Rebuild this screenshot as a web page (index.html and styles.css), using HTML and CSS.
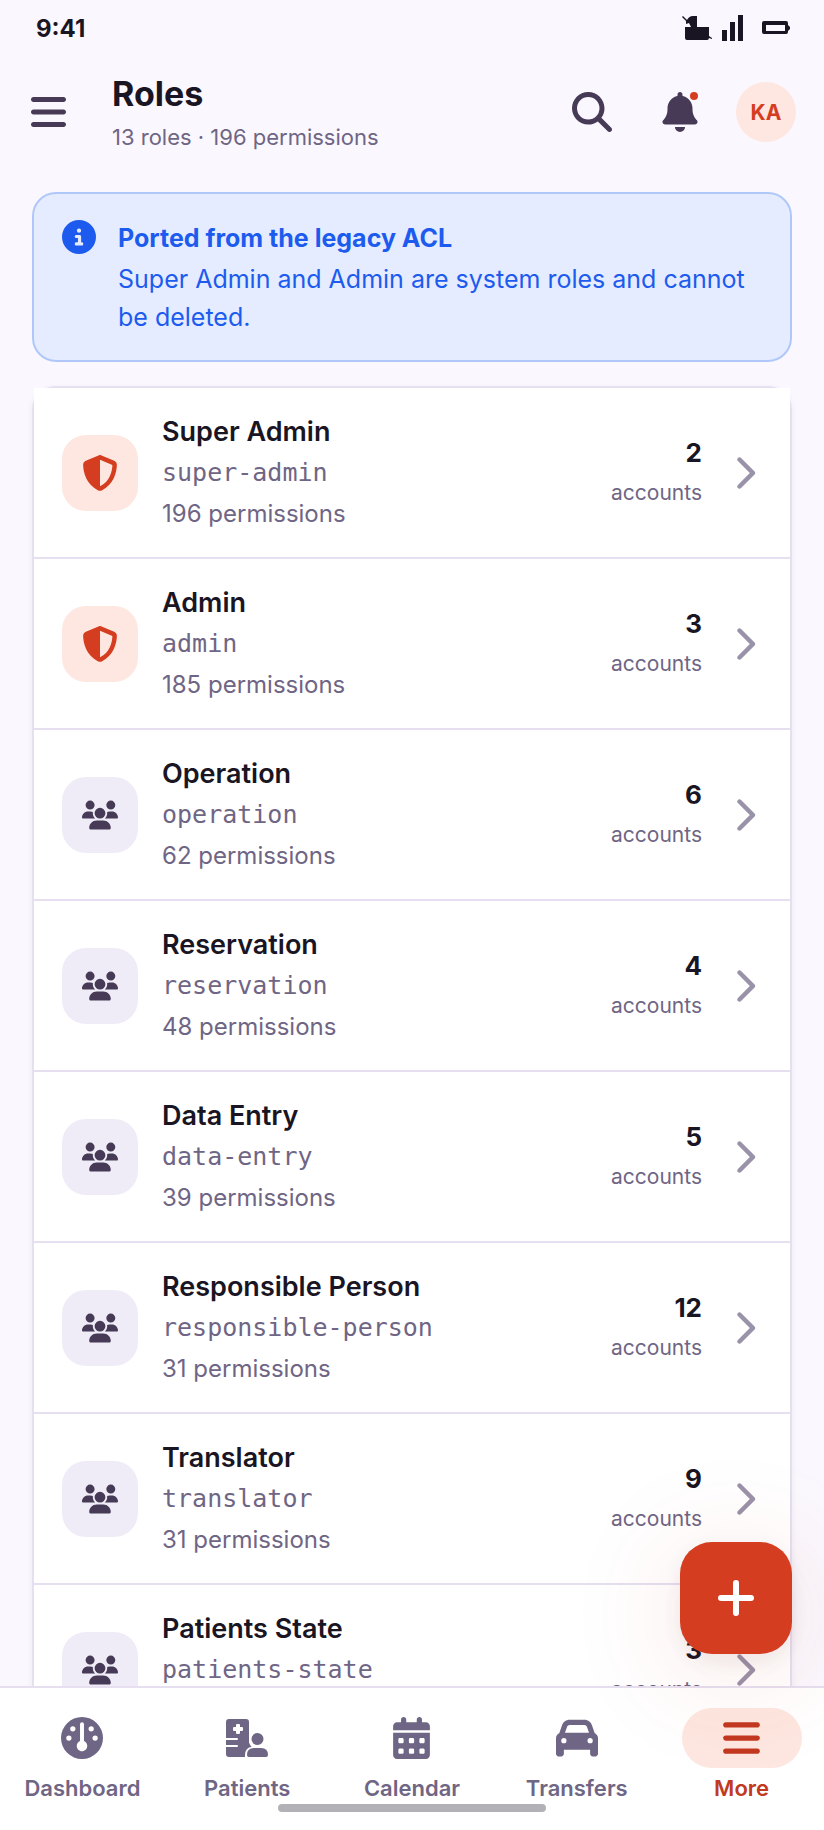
FILE: index.html
```
<!DOCTYPE html>
<html lang="en">
<head>
    <meta charset="UTF-8">
    <meta name="viewport" content="width=device-width, initial-scale=1.0">
    <title>Roles</title>
    <link rel="stylesheet" href="styles.css">
</head>
<body>
    <!-- shared icons -->
    <svg class="sprite" aria-hidden="true">
        <symbol id="shield" viewBox="0 0 512 512">
            <path d="M256 0c4.6 0 9.2 1 13.4 2.9L457.7 82.8c22 9.3 38.4 31 38.3 57.2c-.5 99.2-41.3 280.7-213.6 363.2c-16.7 8-36.1 8-52.8 0C57.3 420.7 16.5 239.2 16 140c-.1-26.2 16.3-47.9 38.3-57.2L242.7 2.9C246.8 1 251.4 0 256 0zm0 66.8l0 378.1C394 378 431.1 230.1 432 141.4L256 66.8z"/>
        </symbol>
        <symbol id="users" viewBox="0 0 640 512">
            <path d="M144 0a80 80 0 1 1 0 160A80 80 0 1 1 144 0zM512 0a80 80 0 1 1 0 160A80 80 0 1 1 512 0zM0 298.7C0 239.8 47.8 192 106.7 192l42.7 0c15.9 0 31 3.5 44.6 9.7c-1.3 7.2-1.9 14.7-1.9 22.3c0 38.2 16.8 72.5 43.3 96c-.2 0-.4 0-.7 0L21.3 320C9.6 320 0 310.4 0 298.7zM405.3 320c-.2 0-.4 0-.7 0c26.6-23.5 43.3-57.8 43.3-96c0-7.6-.7-15-1.9-22.3c13.6-6.3 28.7-9.7 44.6-9.7l42.7 0C592.2 192 640 239.8 640 298.7c0 11.8-9.6 21.3-21.3 21.3l-213.3 0zM224 224a96 96 0 1 1 192 0 96 96 0 1 1 -192 0zM128 485.3C128 411.7 187.7 352 261.3 352l117.3 0C452.3 352 512 411.7 512 485.3c0 14.7-11.9 26.7-26.7 26.7l-330.7 0c-14.7 0-26.7-11.9-26.7-26.7z"/>
        </symbol>
        <symbol id="chevron" viewBox="-96 0 512 512">
            <path d="M310.6 233.4c12.5 12.5 12.5 32.8 0 45.3l-192 192c-12.5 12.5-32.8 12.5-45.3 0s-12.5-32.8 0-45.3L242.7 256 73.4 86.6c-12.5-12.5-12.5-32.8 0-45.3s32.8-12.5 45.3 0l192 192z"/>
        </symbol>
        <symbol id="bars" viewBox="0 0 448 512">
            <path d="M0 96C0 78.300 14.300 64 32 64l384 0c17.700 0 32 14.300 32 32s-14.300 32-32 32L32 128C14.300 128 0 113.700 0 96zM0 256c0-17.700 14.300-32 32-32l384 0c17.700 0 32 14.300 32 32s-14.300 32-32 32L32 288c-17.700 0-32-14.300-32-32zM448 416c0 17.700-14.300 32-32 32L32 448c-17.700 0-32-14.300-32-32s14.300-32 32-32l384 0c17.700 0 32 14.300 32 32z"/>
        </symbol>
    </svg>

    <div class="status-bar">
        <span class="time">9:41</span>
        <div class="status-icons">
            <svg width="30" height="28" viewBox="0 0 30 28">
                <path d="M3 13h12V2H11C8 2 6 4 5 6L1 2 0 3l4 4v3l3-1 2 4H3v11q0 2 2 2h20q2 0 2-2l3 1v-1l-3-2V13z"/>
            </svg>
            <svg width="22" height="28" viewBox="0 0 22 28">
                <path d="M0 16h5v11H0zM8 8h5v19H8zM16 1h5v26h-5z"/>
            </svg>
            <svg width="28" height="28" viewBox="0 0 28 28">
                <path fill-rule="evenodd" d="M2 7h22q2 0 2 2v2l2 2v2l-2 2v1q0 2-2 2H2q-2 0-2-2V9q0-2 2-2zM4 11v6h19v-6z"/>
            </svg>
        </div>
    </div>

    <header class="app-bar">
        <button class="icon-btn menu-btn" aria-label="Menu">
            <svg width="35" height="40"><use href="#bars"/></svg>
        </button>
        <div class="titles">
            <h1>Roles</h1>
            <p>13 roles · 196 permissions</p>
        </div>
        <div class="actions">
            <button class="icon-btn" aria-label="Search">
                <svg width="40" height="40" viewBox="0 0 512 512">
                    <path d="M416 208c0 45.900-14.900 88.300-40 122.700L502.600 457.400c12.500 12.500 12.500 32.800 0 45.300s-32.800 12.500-45.300 0L330.700 376c-34.400 25.200-76.800 40-122.700 40C93.100 416 0 322.900 0 208S93.100 0 208 0S416 93.100 416 208zM208 352a144 144 0 1 0 0-288 144 144 0 1 0 0 288z"/>
                </svg>
            </button>
            <button class="icon-btn" aria-label="Notifications">
                <svg width="36" height="40" viewBox="0 0 448 512">
                    <path d="M224 0c-17.700 0-32 14.300-32 32l0 19.200C119 66 64 130.600 64 208l0 18.800c0 47-17.300 92.400-48.500 127.600l-7.400 8.300c-8.400 9.400-10.400 22.900-5.300 34.400S19.400 416 32 416l384 0c12.600 0 24-7.400 29.200-18.900s3.100-25-5.300-34.400l-7.400-8.300C401.300 319.200 384 273.900 384 226.800l0-18.800c0-77.400-55-142-128-156.800L256 32c0-17.700-14.300-32-32-32zm45.300 493.300c12-12 18.700-28.300 18.700-45.300l-64 0-64 0c0 17 6.700 33.300 18.700 45.300s28.300 18.700 45.300 18.700s33.300-6.700 45.300-18.700z"/>
                </svg>
                <span class="dot"></span>
            </button>
            <button class="avatar">KA</button>
        </div>
    </header>

    <main>
        <section class="notice">
            <svg width="34" height="34" viewBox="0 0 512 512">
                <path d="M256 512A256 256 0 1 0 256 0a256 256 0 1 0 0 512zM216 336l24 0 0-64-24 0c-13.300 0-24-10.700-24-24s10.700-24 24-24l48 0c13.300 0 24 10.700 24 24l0 88 8 0c13.300 0 24 10.700 24 24s-10.700 24-24 24l-80 0c-13.300 0-24-10.700-24-24s10.700-24 24-24zm40-208a32 32 0 1 1 0 64 32 32 0 1 1 0-64z"/>
            </svg>
            <div>
                <h2>Ported from the legacy ACL</h2>
                <p>Super Admin and Admin are system roles and cannot be deleted.</p>
            </div>
        </section>

        <div class="role-list">
            <a class="role" href="#super-admin">
                <span class="tile system"><svg><use href="#shield"/></svg></span>
                <span class="info"><strong>Super Admin</strong><code>super-admin</code><span>196 permissions</span></span>
                <span class="count"><b>2</b><span>accounts</span></span>
                <svg class="chevron"><use href="#chevron"/></svg>
            </a>
            <a class="role" href="#admin">
                <span class="tile system"><svg><use href="#shield"/></svg></span>
                <span class="info"><strong>Admin</strong><code>admin</code><span>185 permissions</span></span>
                <span class="count"><b>3</b><span>accounts</span></span>
                <svg class="chevron"><use href="#chevron"/></svg>
            </a>
            <a class="role" href="#operation">
                <span class="tile"><svg><use href="#users"/></svg></span>
                <span class="info"><strong>Operation</strong><code>operation</code><span>62 permissions</span></span>
                <span class="count"><b>6</b><span>accounts</span></span>
                <svg class="chevron"><use href="#chevron"/></svg>
            </a>
            <a class="role" href="#reservation">
                <span class="tile"><svg><use href="#users"/></svg></span>
                <span class="info"><strong>Reservation</strong><code>reservation</code><span>48 permissions</span></span>
                <span class="count"><b>4</b><span>accounts</span></span>
                <svg class="chevron"><use href="#chevron"/></svg>
            </a>
            <a class="role" href="#data-entry">
                <span class="tile"><svg><use href="#users"/></svg></span>
                <span class="info"><strong>Data Entry</strong><code>data-entry</code><span>39 permissions</span></span>
                <span class="count"><b>5</b><span>accounts</span></span>
                <svg class="chevron"><use href="#chevron"/></svg>
            </a>
            <a class="role" href="#responsible-person">
                <span class="tile"><svg><use href="#users"/></svg></span>
                <span class="info"><strong>Responsible Person</strong><code>responsible-person</code><span>31 permissions</span></span>
                <span class="count"><b>12</b><span>accounts</span></span>
                <svg class="chevron"><use href="#chevron"/></svg>
            </a>
            <a class="role" href="#translator">
                <span class="tile"><svg><use href="#users"/></svg></span>
                <span class="info"><strong>Translator</strong><code>translator</code><span>31 permissions</span></span>
                <span class="count"><b>9</b><span>accounts</span></span>
                <svg class="chevron"><use href="#chevron"/></svg>
            </a>
            <a class="role" href="#patients-state">
                <span class="tile"><svg><use href="#users"/></svg></span>
                <span class="info"><strong>Patients State</strong><code>patients-state</code></span>
                <span class="count"><b>3</b><span>accounts</span></span>
                <svg class="chevron"><use href="#chevron"/></svg>
            </a>
        </div>
    </main>

    <nav class="tab-bar">
        <a href="#dashboard">
            <span class="pill">
                <svg width="42" height="42" viewBox="0 0 512 512">
                    <path d="M0 256a256 256 0 1 1 512 0A256 256 0 1 1 0 256zm320 96c0-26.900-16.500-49.900-40-59.300L280 88c0-13.300-10.700-24-24-24s-24 10.700-24 24l0 204.700c-23.500 9.500-40 32.500-40 59.300c0 35.300 28.700 64 64 64s64-28.700 64-64zM144 176a32 32 0 1 0 0-64 32 32 0 1 0 0 64zm-16 80a32 32 0 1 0 -64 0 32 32 0 1 0 64 0zm288 32a32 32 0 1 0 0-64 32 32 0 1 0 0 64zM400 144a32 32 0 1 0 -64 0 32 32 0 1 0 64 0z"/>
                </svg>
            </span>
            Dashboard
        </a>
        <a href="#patients">
            <span class="pill">
                <svg width="42" height="38" viewBox="0 0 42 38">
                    <path fill-rule="evenodd" d="M3 0h17q3 0 3 3v20.500q1 3 2.500 4.200Q19 29 19 36v2H3q-3 0-3-3v-7h11q1 0 1-1t-1-1H0v-5h11q1 0 1-1t-1-1H0V3q0-3 3-3zM10 6v2H8q-1 0-1 1v2q0 1 1 1h2v2q0 1 1 1h2q1 0 1-1v-2h2q1 0 1-1V9q0-1-1-1h-2V6q0-1-1-1h-2q-1 0-1 1z"/>
                    <circle cx="31.500" cy="20" r="6"/>
                    <path d="M28 29h7q7 0 7 7 0 2-2 2H23q-2 0-2-2 0-7 7-7z"/>
                </svg>
            </span>
            Patients
        </a>
        <a href="#calendar">
            <span class="pill">
                <svg width="37" height="42" viewBox="0 0 448 512">
                    <path d="M128 0c17.700 0 32 14.300 32 32l0 32 128 0 0-32c0-17.700 14.300-32 32-32s32 14.300 32 32l0 32 48 0c26.500 0 48 21.500 48 48l0 48L0 160l0-48C0 85.500 21.500 64 48 64l48 0 0-32c0-17.700 14.300-32 32-32zM0 192l448 0 0 272c0 26.500-21.500 48-48 48L48 512c-26.500 0-48-21.500-48-48L0 192zm64 80l0 32c0 8.800 7.200 16 16 16l32 0c8.800 0 16-7.200 16-16l0-32c0-8.800-7.200-16-16-16l-32 0c-8.800 0-16 7.200-16 16zm128 0l0 32c0 8.800 7.200 16 16 16l32 0c8.800 0 16-7.200 16-16l0-32c0-8.800-7.200-16-16-16l-32 0c-8.800 0-16 7.200-16 16zm144-16c-8.800 0-16 7.200-16 16l0 32c0 8.800 7.200 16 16 16l32 0c8.800 0 16-7.200 16-16l0-32c0-8.800-7.200-16-16-16l-32 0zM64 400l0 32c0 8.800 7.200 16 16 16l32 0c8.800 0 16-7.200 16-16l0-32c0-8.800-7.200-16-16-16l-32 0c-8.800 0-16 7.200-16 16zm144-16c-8.800 0-16 7.200-16 16l0 32c0 8.800 7.200 16 16 16l32 0c8.800 0 16-7.200 16-16l0-32c0-8.800-7.200-16-16-16l-32 0zm112 16l0 32c0 8.800 7.200 16 16 16l32 0c8.800 0 16-7.200 16-16l0-32c0-8.800-7.200-16-16-16l-32 0c-8.800 0-16 7.200-16 16z"/>
                </svg>
            </span>
            Calendar
        </a>
        <a href="#transfers">
            <span class="pill">
                <svg width="42" height="42" viewBox="0 0 512 512">
                    <path d="M135.200 117.400L109.100 192l293.800 0-26.100-74.600C372.300 104.600 360.200 96 346.600 96L165.400 96c-13.600 0-25.700 8.600-30.200 21.400zM39.600 196.800L74.800 96.300C88.300 57.800 124.600 32 165.400 32l181.200 0c40.800 0 77.100 25.800 90.600 64.300l35.200 100.500c23.200 9.600 39.600 32.500 39.600 59.200l0 144 0 48c0 17.700-14.300 32-32 32l-32 0c-17.700 0-32-14.300-32-32l0-48L96 400l0 48c0 17.700-14.300 32-32 32l-32 0c-17.700 0-32-14.300-32-32l0-48L0 256c0-26.700 16.400-49.600 39.600-59.200zM128 288a32 32 0 1 0 -64 0 32 32 0 1 0 64 0zm288 32a32 32 0 1 0 0-64 32 32 0 1 0 0 64z"/>
                </svg>
            </span>
            Transfers
        </a>
        <a class="active" href="#more" aria-current="page">
            <span class="pill"><svg width="37" height="42"><use href="#bars"/></svg></span>
            More
        </a>
        <span class="home-indicator"></span>
    </nav>

    <button class="fab" aria-label="Add role">
        <svg width="36" height="36" viewBox="0 0 36 36">
            <path d="M18 3v30M3 18h30"/>
        </svg>
    </button>
</body>
</html>
```
FILE: styles.css
```
* {
    box-sizing: border-box;
}

body {
    font-family: Inter, "Liberation Sans", sans-serif;
    margin: 0;
    height: 100vh;
    display: flex;
    flex-direction: column;
    overflow: hidden;
    background-color: #faf8fe;
    color: #1a1523;
}

h1, h2, p {
    margin: 0;
}

a {
    color: inherit;
    text-decoration: none;
}

button {
    font-family: inherit;
    border: none;
    padding: 0;
    background: none;
    cursor: pointer;
}

svg {
    display: block;
    flex: none;
    fill: currentColor;
}

.sprite {
    position: absolute;
    width: 0;
    height: 0;
}

/* status bar */
.status-bar {
    display: flex;
    justify-content: space-between;
    align-items: center;
    height: 56px;
    padding: 0 34px 0 36px;
}

.time {
    font-size: 24px;
    font-weight: 700;
}

.status-icons {
    display: flex;
    gap: 18px;
}

.status-icons svg:first-child {
    margin-right: -8px;
}

/* app bar */
.app-bar {
    display: flex;
    align-items: center;
    height: 112px;
    padding: 0 28px 0 31px;
}

.icon-btn {
    position: relative;
    color: #463a56;
}

.titles {
    flex: 1;
    padding: 6px 0 0 46px;
}

.titles h1 {
    font-size: 34px;
    line-height: 44px;
    font-weight: 700;
}

.titles p {
    font-size: 22px;
    line-height: 42px;
    color: #6f6584;
}

.actions {
    display: flex;
    align-items: center;
}

.actions .icon-btn {
    display: flex;
    justify-content: center;
    width: 88px;
}

.dot {
    position: absolute;
    top: -2px;
    right: 24px;
    width: 12px;
    height: 12px;
    border: 2px solid #faf8fe;
    border-radius: 50%;
    background-color: #d53d20;
}

.avatar {
    width: 60px;
    height: 60px;
    margin-left: 12px;
    border-radius: 50%;
    background-color: #fde7e0;
    color: #d53d20;
    font-size: 21px;
    font-weight: 700;
}

/* content */
main {
    flex: 1;
    min-height: 0;
    overflow: hidden;
    padding: 24px 32px 0;
}

.notice {
    display: flex;
    gap: 22px;
    padding: 26px 28px 24px;
    border: 2px solid #b0c8f9;
    border-radius: 24px;
    background-color: #e5ecff;
    color: #1d5bef;
    font-size: 25px;
    line-height: 38px;
}

.notice h2 {
    margin-bottom: 4px;
    font-size: 25px;
    line-height: 36px;
    font-weight: 700;
}

.role-list {
    margin-top: 24px;
    border: 2px solid #e5dff0;
    border-radius: 24px;
    background-color: #fff;
    box-shadow: 0 2px 6px rgba(70, 58, 86, 0.08);
}

.role {
    display: flex;
    align-items: center;
    height: 171px;
    padding: 0 28px;
    border-bottom: 2px solid #e5dff0;
    background-color: #fff;
}

.tile {
    display: flex;
    align-items: center;
    justify-content: center;
    width: 76px;
    height: 76px;
    border-radius: 24px;
    background-color: #efecf7;
    color: #463a56;
}

.tile svg {
    width: 36px;
    height: 36px;
}

.system {
    background-color: #fde7e0;
    color: #d53d20;
}

.info {
    flex: 1;
    align-self: flex-start;
    display: flex;
    flex-direction: column;
    gap: 1px;
    padding: 24px 0 0 24px;
    font-size: 24px;
    line-height: 40px;
    color: #6f6584;
}

.info strong {
    font-size: 27px;
    font-weight: 600;
    color: #1a1523;
}

.info code {
    font-family: "DejaVu Sans Mono", monospace;
    font-size: 25px;
}

.count {
    display: flex;
    flex-direction: column;
    align-items: flex-end;
    font-size: 21px;
    line-height: 40px;
    color: #6f6584;
}

.count b {
    font-size: 26px;
    font-weight: 700;
    color: #1a1523;
}

.chevron {
    width: 36px;
    height: 36px;
    margin-left: 24px;
    color: #9a92a9;
}

/* bottom tabs */
.tab-bar {
    position: relative;
    display: grid;
    grid-template-columns: repeat(5, 1fr);
    height: 144px;
    padding-top: 20px;
    border-top: 2px solid #e5dff0;
    background-color: #fff;
}

.tab-bar a {
    display: flex;
    flex-direction: column;
    align-items: center;
    gap: 4px;
    font-size: 22px;
    line-height: 32px;
    font-weight: 600;
    color: #6f6584;
}

.pill {
    display: flex;
    align-items: center;
    justify-content: center;
    width: 120px;
    height: 60px;
    border-radius: 30px;
}

.tab-bar .active {
    color: #c23820;
}

.active .pill {
    background-color: #fde7e0;
}

.home-indicator {
    position: absolute;
    left: 50%;
    bottom: 18px;
    width: 268px;
    height: 8px;
    margin-left: -134px;
    border-radius: 4px;
    background-color: #b3b1b8;
}

.fab {
    position: fixed;
    right: 32px;
    bottom: 176px;
    display: flex;
    align-items: center;
    justify-content: center;
    width: 112px;
    height: 112px;
    border-radius: 32px;
    background-color: #d53d20;
    box-shadow: 0 16px 120px rgba(213, 61, 32, 0.14), 0 8px 24px rgba(70, 30, 50, 0.08);
}

.fab svg {
    fill: none;
    stroke: #fff;
    stroke-width: 6;
    stroke-linecap: round;
}
```
